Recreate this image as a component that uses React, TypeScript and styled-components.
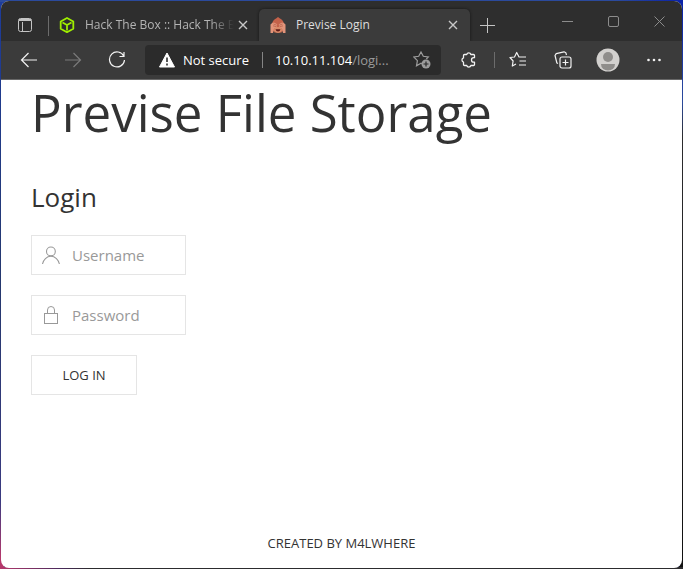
import React from "react";
import styled, { createGlobalStyle, css } from "styled-components";

const GlobalStyle = createGlobalStyle`
  * { box-sizing: border-box; }
  body {
    margin: 0;
    font-family: "Segoe UI", "Open Sans", "Noto Sans", sans-serif;
    background: #10205c;
  }
  button, input { font: inherit; color: inherit; }
  button { padding: 0; border: 0; background: none; cursor: pointer; }
  svg { display: block; flex: none; }
`;

const Desktop = styled.div`
  display: flex;
  min-height: 100vh;
  padding: 1px;
  background: linear-gradient(90deg, #b5386c 0, #4a2a5c 60px, #2c2c2e 90px, #2c2c2e 100%) bottom / 100% 2px no-repeat,
    linear-gradient(90deg, #2b4a9c, #2b4a9c 90%, #0a22a8) top / 100% 2px no-repeat,
    linear-gradient(#1d3c9c 0, #25386e 50%, #3a3a80 88%, #b5386c 98%) left / 4px 100% no-repeat,
    linear-gradient(#0a22a8 0, #2b4a9c 18%, #2c2c2e 24%, #111 100%) right / 4px 100% no-repeat;
`;

const Window = styled.div`
  flex: 1;
  min-width: 0;
  display: flex;
  flex-direction: column;
  overflow: hidden;
  border-radius: 8px;
  background: #fff;
`;

const TabStrip = styled.div`
  display: flex;
  align-items: flex-end;
  height: 40px;
  background: #2e2e2e;
`;

const TabActions = styled.button`
  display: flex;
  align-items: center;
  justify-content: center;
  width: 47px;
  height: 32px;
  color: #c4c4c4;
`;

const Divider = styled.span<{ $height: number; $color?: string }>`
  flex: none;
  width: 1px;
  height: ${(p) => p.$height}px;
  background: ${(p) => p.$color ?? "#6c6c6c"};
`;

const StripDivider = styled(Divider)`
  margin-bottom: 5px;
`;

const Tab = styled.div<{ $active?: boolean }>`
  display: flex;
  align-items: center;
  gap: 10px;
  width: 210px;
  height: 32px;
  padding: 0 9px 0 10px;
  font-size: 12px;
  line-height: 16px;
  color: #b4b4b4;
  ${(p) =>
    p.$active &&
    css`
      gap: 9px;
      width: 211px;
      padding-right: 10px;
      border-radius: 5px 5px 0 0;
      background: #3b3b3b;
      box-shadow: 0 0 3px #151515;
      clip-path: inset(-4px -4px 0 -4px);
      color: #dedede;
    `}
`;

const TabTitle = styled.span<{ $faded?: boolean }>`
  flex: 1;
  min-width: 0;
  overflow: hidden;
  white-space: nowrap;
  ${(p) =>
    p.$faded &&
    css`
      mask-image: linear-gradient(90deg, #000 calc(100% - 24px), transparent);
    `}
`;

const TabClose = styled.button`
  display: flex;
  align-items: center;
  justify-content: center;
  width: 14px;
  height: 16px;
  margin-left: -8px;
  color: #c8c8c8;
`;

const NewTab = styled.button`
  display: flex;
  align-items: center;
  justify-content: center;
  width: 34px;
  height: 32px;
  color: #c4c4c4;
`;

const WindowControls = styled.div`
  display: flex;
  align-self: stretch;
  margin-left: auto;
`;

const WindowButton = styled.button`
  display: flex;
  align-items: center;
  justify-content: center;
  width: 46px;
  color: #8c8c8c;
`;

const Toolbar = styled.div`
  display: flex;
  align-items: center;
  height: 39px;
  padding: 0 5px 0 6px;
  background: #3b3b3b;
  border-bottom: 1px solid #686868;
`;

const ToolButton = styled.button<{ $width?: number }>`
  display: flex;
  align-items: center;
  justify-content: center;
  flex: none;
  width: ${(p) => p.$width ?? 44}px;
  height: 30px;
  color: #f2f2f2;
  &:disabled { color: #7a7a7a; }
`;

const AddressBar = styled.div`
  flex: 1;
  min-width: 0;
  display: flex;
  align-items: center;
  height: 30px;
  margin: 0 3px 0 6px;
  padding: 0 10px 0 14px;
  border-radius: 4px;
  background: #2b2b2b;
  color: #fff;
  font-size: 13px;
  line-height: 18px;
`;

const Security = styled.button`
  display: flex;
  align-items: center;
  gap: 8px;
  width: 103px;
  flex: none;
  white-space: nowrap;
`;

const Url = styled.span`
  flex: 1;
  min-width: 0;
  padding-left: 12px;
  white-space: nowrap;
`;

const UrlPath = styled.span`
  color: #9a9a9a;
`;

const FavoriteButton = styled.button`
  color: #9c9c9c;
`;

const Page = styled.main`
  flex: 1;
  display: flex;
  flex-direction: column;
  padding: 0 30px;
  color: #333;
`;

const PageTitle = styled.h1`
  margin: 0;
  font-size: 51px;
  line-height: 64px;
  font-weight: 400;
  white-space: nowrap;
`;

const LoginForm = styled.form`
  display: flex;
  flex-direction: column;
  align-items: flex-start;
  gap: 20px;
  margin-top: 36px;
`;

const FormTitle = styled.h2`
  margin: 0;
  font-size: 26px;
  line-height: 35px;
  font-weight: 400;
`;

const Field = styled.label`
  display: flex;
  align-items: center;
  width: 155px;
  height: 40px;
  border: 1px solid #e5e5e5;
  color: #999;
  &:focus-within { border-color: #1e87f0; }
`;

const FieldIcon = styled.span`
  display: flex;
  justify-content: center;
  flex: none;
  width: 38px;
`;

const FieldInput = styled.input`
  flex: 1;
  min-width: 0;
  padding: 0 0 0 2px;
  border: 0;
  outline: 0;
  background: none;
  font-size: 15px;
  line-height: 22px;
  color: #666;
  &::placeholder { color: #999; opacity: 1; }
`;

const SubmitButton = styled.button`
  height: 40px;
  width: 106px;
  border: 1px solid #e5e5e5;
  font-size: 13px;
  line-height: 38px;
  text-transform: uppercase;
  color: #333;
`;

const Footer = styled.footer`
  margin-top: auto;
  padding-bottom: 14px;
  text-align: center;
  font-size: 13px;
  line-height: 22px;
`;

const FooterLink = styled.a`
  color: #333;
  text-decoration: none;
  text-transform: uppercase;
`;

type IconProps = { size: number; children: React.ReactNode; box?: number; weight?: number };

const Icon = ({ size, children, box = size, weight = 1 }: IconProps) => (
  <svg
    width={size}
    height={size}
    viewBox={`0 0 ${box} ${box}`}
    fill="none"
    stroke="currentColor"
    strokeWidth={weight}
    aria-hidden="true"
  >
    {children}
  </svg>
);

const CubeIcon = () => (
  <Icon size={16} weight={1.8}>
    <path
      d="M8 1 14.300 4.500v7.200L8 15.200l-6.300-3.500V4.500zM3.500 5.500 8 8l4.500-2.500M8 8v5.500"
      stroke="#9fef00"
      strokeLinejoin="round"
    />
  </Icon>
);

const MonkeyIcon = () => (
  <svg width="18" height="18" viewBox="0 0 18 18" aria-hidden="true">
    <path d="M3 8Q3.500 4 7 2.500L9 1l2 1.500Q14.500 4 15 8l.5 5-3 3.500h-7L2.500 13z" fill="#c4624a" />
    <path d="M5.500 11h7l.5 3.500Q11.500 17 9 17t-4-2.500z" fill="#d98a68" />
    <path d="M1.500 8.500Q3 6.500 5 6.500l3.200 1.800-.7 2.700-2.500 1.500-1 4.500H1.500zM16.500 8.500Q15 6.500 13 6.500L9.800 8.300l.7 2.700 2.500 1.500 1 4.500h2.500z" fill="#e2947a" />
    <path d="M6.500 13.300h5Q11 15.500 9 15.500t-2.500-2.200z" fill="#5e1a18" />
    <path d="m4.500 8 3.200 1.200M4 9.800l3 .8M13.500 8l-3.200 1.200M14 9.800l-3 .8" stroke="#b35a44" strokeWidth=".7" />
  </svg>
);

const CloseIcon = () => (
  <Icon size={10} weight={1.4}>
    <path d="m1 1 8 8M9 1 1 9" />
  </Icon>
);

const AvatarIcon = () => (
  <svg width="24" height="24" viewBox="0 0 24 24" aria-hidden="true">
    <circle cx="12" cy="12" r="11.500" fill="#d2d0ce" />
    <circle cx="12" cy="9" r="5" fill="#8f8d8b" />
    <path d="M5 16h14q0 3-2 4.800-2 1.700-5 1.700t-5-1.700Q5 19 5 16z" fill="#8f8d8b" />
  </svg>
);

export default function App() {
  return (
    <>
      <GlobalStyle />
      <Desktop>
        <Window>
          <TabStrip>
            <TabActions aria-label="Tab actions menu">
              <Icon size={16}>
                <rect x="1.500" y="1.500" width="13" height="13" rx="2" />
                <path d="M2 3.500h12M5.500 5v9" />
                <path d="M2 2.500h12" />
              </Icon>
            </TabActions>
            <StripDivider $height={20} />
            <Tab>
              <CubeIcon />
              <TabTitle $faded>Hack The Box :: Hack The Box</TabTitle>
              <TabClose aria-label="Close tab">
                <CloseIcon />
              </TabClose>
            </Tab>
            <Tab $active>
              <MonkeyIcon />
              <TabTitle>Previse Login</TabTitle>
              <TabClose aria-label="Close tab">
                <CloseIcon />
              </TabClose>
            </Tab>
            <NewTab aria-label="New tab">
              <Icon size={15}>
                <path d="M7.500 0v15M0 7.500h15" />
              </Icon>
            </NewTab>
            <WindowControls>
              <WindowButton aria-label="Minimize">
                <Icon size={11}>
                  <path d="M0 5.500h11" />
                </Icon>
              </WindowButton>
              <WindowButton aria-label="Maximize">
                <Icon size={11}>
                  <rect x=".5" y=".5" width="10" height="10" rx="1.500" />
                </Icon>
              </WindowButton>
              <WindowButton aria-label="Close">
                <Icon size={11}>
                  <path d="m.5.5 10 10M10.500.5l-10 10" />
                </Icon>
              </WindowButton>
            </WindowControls>
          </TabStrip>

          <Toolbar>
            <ToolButton aria-label="Back">
              <Icon size={18} weight={1.2}>
                <path d="M17 9H1.500M8.500 2l-7 7 7 7" />
              </Icon>
            </ToolButton>
            <ToolButton aria-label="Forward" disabled>
              <Icon size={18} weight={1.2}>
                <path d="M1 9h15.500M9.500 2l7 7-7 7" />
              </Icon>
            </ToolButton>
            <ToolButton aria-label="Refresh">
              <Icon size={18} weight={1.2}>
                <path d="M15.800 5.200A7.500 7.500 0 1 0 16.500 9M16 1v4.500h-4.500" />
              </Icon>
            </ToolButton>
            <AddressBar>
              <Security>
                <svg width="16" height="16" viewBox="0 0 16 16" aria-hidden="true">
                  <path d="M8 1 15.500 15H.5z" fill="#fff" stroke="#fff" strokeLinejoin="round" />
                  <path d="M8 5.500v4.500M8 11.500v2" stroke="#2b2b2b" strokeWidth="1.600" />
                </svg>
                Not secure
              </Security>
              <Divider $height={16} $color="#858585" />
              <Url>
                10.10.11.104<UrlPath>/logi...</UrlPath>
              </Url>
              <FavoriteButton aria-label="Add this page to favorites">
                <Icon size={18} weight={1.2}>
                  <path d="M9.500 13 8 12.200l-4.500 2.600.9-5.200L.8 6l4.900-.7L8 1l2.300 4.300 5 .7-2 2" />
                  <circle cx="13" cy="13" r="4.500" fill="currentColor" stroke="none" />
                  <path d="M13 10.500v5M10.500 13h5" stroke="#2b2b2b" />
                </Icon>
              </FavoriteButton>
            </AddressBar>
            <ToolButton $width={50} aria-label="Extensions">
              <Icon size={18} weight={1.3}>
                <path
                  d="M4.500 3.500h2.200a2.200 2.200 0 0 1 4.200 0h2.600a1 1 0 0 1 1 1v2.200h-.8a2.200 2.200 0 0 0 0 4.400h.8v2.400a1 1 0 0 1-1 1h-2.600a2.200 2.200 0 0 1-4.200 0H4.500a1 1 0 0 1-1-1v-2.400a2.200 2.200 0 0 1 0-4.200V4.500a1 1 0 0 1 1-1z"
                  strokeLinejoin="round"
                />
              </Icon>
            </ToolButton>
            <Divider $height={16} />
            <ToolButton $width={46} aria-label="Favorites">
              <Icon size={18} weight={1.2}>
                <path
                  d="m7 13-3.700 2 .8-5L1 6.500 5.500 6l2.200-4.500L10 6h7M10.500 10H17M10 14h7"
                  strokeLinejoin="round"
                />
              </Icon>
            </ToolButton>
            <ToolButton aria-label="Collections">
              <Icon size={18} weight={1.2}>
                <path d="M4 12.500 2.900 12 1 4.500l1.200-1.800 7.800-1.900 1.800.9.700 2.300" strokeLinejoin="round" />
                <rect x="6" y="6" width="11" height="11" rx="2" />
                <path d="M11.500 8.500v6M8.500 11.500h6" />
              </Icon>
            </ToolButton>
            <ToolButton $width={46} aria-label="Profile">
              <AvatarIcon />
            </ToolButton>
            <ToolButton $width={46} aria-label="Settings and more">
              <Icon size={16}>
                <g fill="currentColor" stroke="none">
                  <circle cx="2.500" cy="8" r="1.300" />
                  <circle cx="8" cy="8" r="1.300" />
                  <circle cx="13.500" cy="8" r="1.300" />
                </g>
              </Icon>
            </ToolButton>
          </Toolbar>

          <Page>
            <PageTitle>Previse File Storage</PageTitle>
            <LoginForm onSubmit={(e) => e.preventDefault()}>
              <FormTitle>Login</FormTitle>
              <Field>
                <FieldIcon>
                  <Icon size={20} weight={1.1}>
                    <circle cx="9.900" cy="6.400" r="4.400" />
                    <path d="M1.500 19c.8-4.300 4.200-7.700 8.400-7.700s7.700 3.400 8.500 7.700" />
                  </Icon>
                </FieldIcon>
                <FieldInput type="text" name="username" placeholder="Username" aria-label="Username" />
              </Field>
              <Field>
                <FieldIcon>
                  <Icon size={20}>
                    <rect x="3.500" y="8.500" width="13" height="10" />
                    <path d="M6.500 8V5a3.500 3.500 0 0 1 7 0v3" />
                  </Icon>
                </FieldIcon>
                <FieldInput type="password" name="password" placeholder="Password" aria-label="Password" />
              </Field>
              <SubmitButton type="submit">Log in</SubmitButton>
            </LoginForm>
            <Footer>
              <FooterLink href="#">Created by m4lwhere</FooterLink>
            </Footer>
          </Page>
        </Window>
      </Desktop>
    </>
  );
}
